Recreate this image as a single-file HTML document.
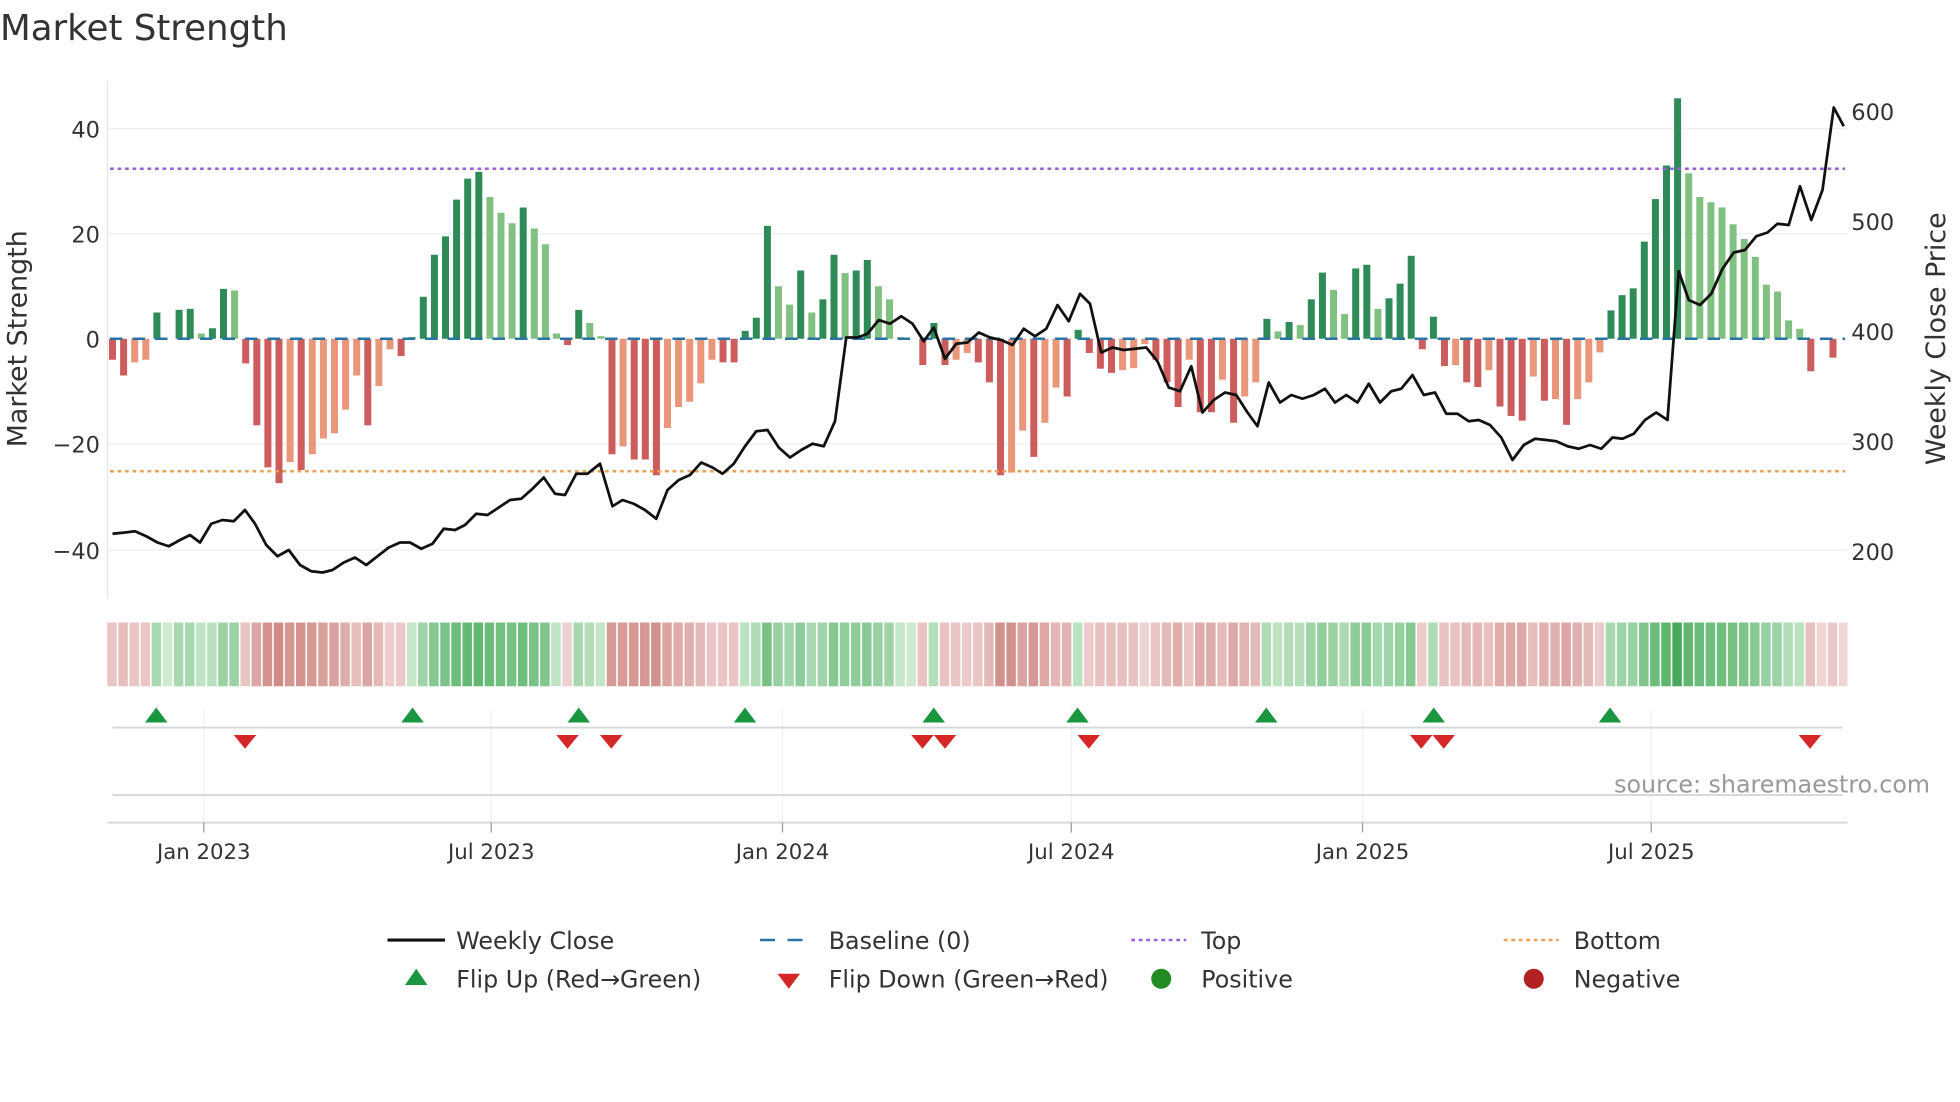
<!DOCTYPE html>
<html><head><meta charset="utf-8"><style>
html,body{margin:0;padding:0;background:#fff;}
svg{display:block;font-family:"DejaVu Sans","Liberation Sans",sans-serif;}
</style></head><body>
<svg id="s" width="1960" height="1102" viewBox="0 0 1568 881.6" xmlns="http://www.w3.org/2000/svg">
<rect width="1568" height="882" fill="#fff"/>
<text x="0" y="32" font-size="28.5" fill="#333">Market Strength</text>
<g stroke="#eef0f4" stroke-width="1.2">
<line x1="86" y1="103" x2="1478" y2="103"/><line x1="86" y1="187" x2="1478" y2="187"/>
<line x1="86" y1="355" x2="1478" y2="355"/><line x1="86" y1="440" x2="1478" y2="440"/>
</g>
<line x1="86" y1="65" x2="86" y2="478" stroke="#e6e6e6" stroke-width="1"/>
<g font-size="18" fill="#333" text-anchor="end">
<text x="80" y="110">40</text><text x="80" y="194">20</text><text x="80" y="278">0</text>
<text x="80" y="362">−20</text><text x="80" y="447">−40</text></g>
<g font-size="18" fill="#333">
<text x="1481" y="96">600</text><text x="1481" y="184">500</text><text x="1481" y="272">400</text>
<text x="1481" y="360">300</text><text x="1481" y="448">200</text></g>
<text transform="translate(21,271) rotate(-90)" text-anchor="middle" font-size="21.5" fill="#333">Market Strength</text>
<text transform="translate(1556,271) rotate(-90)" text-anchor="middle" font-size="21.5" fill="#333">Weekly Close Price</text>
<g id="bars"></g>
<line x1="88" y1="271" x2="1476" y2="271" stroke="#2874a6" stroke-width="2" stroke-dasharray="10,8"/>
<line x1="88" y1="135" x2="1476" y2="135" stroke="#9b5fe0" stroke-width="2" stroke-dasharray="3,3"/>
<line x1="88" y1="377" x2="1476" y2="377" stroke="#f0a050" stroke-width="2" stroke-dasharray="3,3"/>
<polyline id="price" fill="none" stroke="#111" stroke-width="2.2" stroke-linejoin="round"/>
<g id="heat"></g>
<g stroke="#eef0f2" stroke-width="1">
<line x1="163" y1="568" x2="163" y2="658"/><line x1="393" y1="568" x2="393" y2="658"/><line x1="626" y1="568" x2="626" y2="658"/>
<line x1="857" y1="568" x2="857" y2="658"/><line x1="1090" y1="568" x2="1090" y2="658"/><line x1="1321" y1="568" x2="1321" y2="658"/>
</g>
<line x1="90" y1="582" x2="1474" y2="582" stroke="#d5d8da" stroke-width="1.5"/>
<line x1="90" y1="636" x2="1474" y2="636" stroke="#d5d8da" stroke-width="1.5"/>
<line x1="86" y1="658" x2="1478" y2="658" stroke="#d5d8da" stroke-width="1.5"/>
<g id="flips"></g>
<g stroke="#999" stroke-width="1">
<line x1="163" y1="658" x2="163" y2="666"/><line x1="393" y1="658" x2="393" y2="666"/><line x1="626" y1="658" x2="626" y2="666"/>
<line x1="857" y1="658" x2="857" y2="666"/><line x1="1090" y1="658" x2="1090" y2="666"/><line x1="1321" y1="658" x2="1321" y2="666"/>
</g>
<g font-size="17" fill="#333" text-anchor="middle">
<text x="163" y="687">Jan 2023</text><text x="393" y="687">Jul 2023</text><text x="626" y="687">Jan 2024</text>
<text x="857" y="687">Jul 2024</text><text x="1090" y="687">Jan 2025</text><text x="1321" y="687">Jul 2025</text></g>
<text x="1544" y="634" font-size="19" fill="#999" text-anchor="end">source: sharemaestro.com</text>
<g font-size="19" fill="#333">
<line x1="310" y1="752" x2="356" y2="752" stroke="#111" stroke-width="2.5"/>
<text x="365" y="759">Weekly Close</text>
<line x1="608" y1="752" x2="652" y2="752" stroke="#2874a6" stroke-width="2" stroke-dasharray="12,10"/>
<text x="663" y="759">Baseline (0)</text>
<line x1="905" y1="752" x2="949" y2="752" stroke="#9b5fe0" stroke-width="2" stroke-dasharray="3,3"/>
<text x="961" y="759">Top</text>
<line x1="1203" y1="752" x2="1247" y2="752" stroke="#f0a050" stroke-width="2" stroke-dasharray="3,3"/>
<text x="1259" y="759">Bottom</text>
<polygon points="324,788 342,788 333,775" fill="#1a9641"/>
<text x="365" y="790">Flip Up (Red→Green)</text>
<polygon points="622,779 640,779 631,791" fill="#d62728"/>
<text x="663" y="790">Flip Down (Green→Red)</text>
<circle cx="929" cy="783" r="8" fill="#228b22"/>
<text x="961" y="790">Positive</text>
<circle cx="1227" cy="783" r="8" fill="#b22222"/>
<text x="1259" y="790">Negative</text>
</g>
</svg>
<script>
var v=[-4,-7,-4.5,-4,5,0,5.5,5.7,1,2,9.5,9.2,-4.7,-16.5,-24.5,-27.5,-23.5,-25,-22,-19,-18,-13.5,-7,-16.5,-9,-2,-3.3,0.3,8,16,19.5,26.5,30.5,31.8,27,24,22,25,21,18,1,-1.2,5.5,3,0.5,-22,-20.5,-23,-23,-26,-17,-13,-12,-8.5,-4,-4.5,-4.5,1.5,4,21.5,10,6.5,13,5,7.5,16,12.5,13,15,10,7.5,0.3,0,-5,3,-5,-4,-2.7,-4.5,
-8.3,-26,-25.5,-17.5,-22.5,-16,-9.3,-11,1.7,-2.7,-5.7,-6.5,-6,-5.6,-1,-4,-8.3,-13,-4,-14,-14,-7.8,-16,-11,-8.3,3.8,1.4,3.2,2.6,7.5,12.6,9.3,4.7,13.4,14.1,5.7,7.7,10.5,15.8,-2,4.2,-5.2,-5,-8.3,-9.2,-6,-12.9,-14.7,-15.6,-7.2,-11.8,-11.5,-16.4,-11.5,-8.3,-2.6,5.4,8.3,9.6,18.5,26.6,33,45.8,31.5,27,26,25,21.8,19,15.6,10.3,9,3.5,1.9,-6.2,-0.1,-3.6];
var NS="http://www.w3.org/2000/svg",b=document.getElementById('bars'),h=document.getElementById('heat');
function el(p,t,a){var e=document.createElementNS(NS,t);for(var k in a)e.setAttribute(k,a[k]);p.appendChild(e);return e;}
function mix(c1,c2,t){return 'rgb('+c1.map(function(c,i){return Math.round(c+(c2[i]-c)*t)}).join(',')+')';}
var SP=8.88;
for(var i=0;i<v.length;i++){var x=90+SP*i,val=v[i],p=i?v[i-1]:0;
 if(Math.abs(val)>0.2){var dark=(val*p>0&&Math.abs(val)>=Math.abs(p))||(val*p<=0);
  var col=val>0?(dark?'#2e8b57':'#80c080'):(dark?'#cd5c5c':'#e9967a');
  var y=271-4.2*Math.max(val,0),hh=4.2*Math.abs(val);el(b,'rect',{x:x-2.8,y:y,width:5.6,height:hh,fill:col});}
 var t=Math.min(Math.abs(val)/46,1),hc;
 if(val>=0)hc=mix([205,234,208],[70,170,90],Math.pow(t,0.6));else hc=mix([240,214,214],[208,140,135],Math.pow(Math.min(Math.abs(val)/28,1),0.8));
 el(h,'rect',{x:x-4.2,y:498,width:7.6,height:51,fill:hc});}
el(h,'rect',{x:90+SP*v.length-4.2,y:498,width:Math.max(0,1478-(90+SP*v.length-4.2)),height:51,fill:'rgb(238,214,214)'});
var pts=[[90,427],[100,426],[108,425],[117,429],[126,434],[135,437],[144,432],[152,428],[160,434],[169,419],[178,416],[187,417],[196,408],[204,419],[213,436],[222,445],[231,440],[240,452],[249,457],[258,458],[266,456],[275,450],[284,446],[293,452],[302,445],[311,438],[320,434],[328,434],[337,439],[346,435],[355,423],[364,424],[372,420],[381,411],[390,412],[399,406],[408,400],[417,399],[426,391],[435,382],[444,395],[452,396],[461,379],[470,379],[480,371],[490,405],[498,400],[507,403],[516,408],[525,415],[534,392],[543,384],[552,380],[561,370],[570,374],[578,379],[587,371],[596,357],[605,345],[614,344],[623,358],[632,366],[641,360],[650,355],[659,357],[668,337],[677,270],[686,270],[694,267],[703,256],[712,259],[721,253],[730,259],[739,273],[747,262],[756,287],[765,275],[774,274],[783,266],[792,270],[801,272],[810,276],[819,263],[828,269],[837,263],[846,244],[855,257],[864,235],[872,243],[881,282],[890,278],[899,280],[908,279],[917,278],[926,289],[935,310],[944,313],[953,293],[962,330],[971,320],[980,314],[989,316],[998,330],[1006,341],[1015,306],[1024,322],[1033,316],[1042,319],[1051,316],[1060,311],[1068,322],[1077,316],[1086,322],[1095,307],[1104,322],[1113,313],[1121,311],[1130,300],[1139,316],[1148,314],[1157,331],[1166,331],[1175,337],[1183,336],[1192,340],[1201,350],[1210,368],[1219,356],[1228,351],[1237,352],[1245,353],[1254,357],[1263,359],[1272,356],[1281,359],[1290,350],[1298,351],[1307,347],[1316,336],[1325,330],[1334,336],[1343,217],[1351,240],[1360,244],[1369,235],[1378,215],[1387,202],[1396,200],[1405,189],[1414,186],[1422,179],[1431,180],[1440,149],[1449,176],[1458,152],[1467,86],[1475,101]];
document.getElementById('price').setAttribute('points',pts.map(function(p){return p.join(',')}).join(' '));
var f=document.getElementById('flips');
[125,330,463,596,747,862,1013,1147,1288].forEach(function(x){el(f,'polygon',{points:(x-9)+',578 '+(x+9)+',578 '+x+',566',fill:'#1a9641'});});
[196,454,489,738,756,871,1137,1155,1448].forEach(function(x){el(f,'polygon',{points:(x-9)+',588 '+(x+9)+',588 '+x+',599',fill:'#d62728'});});
</script>
</body></html>
